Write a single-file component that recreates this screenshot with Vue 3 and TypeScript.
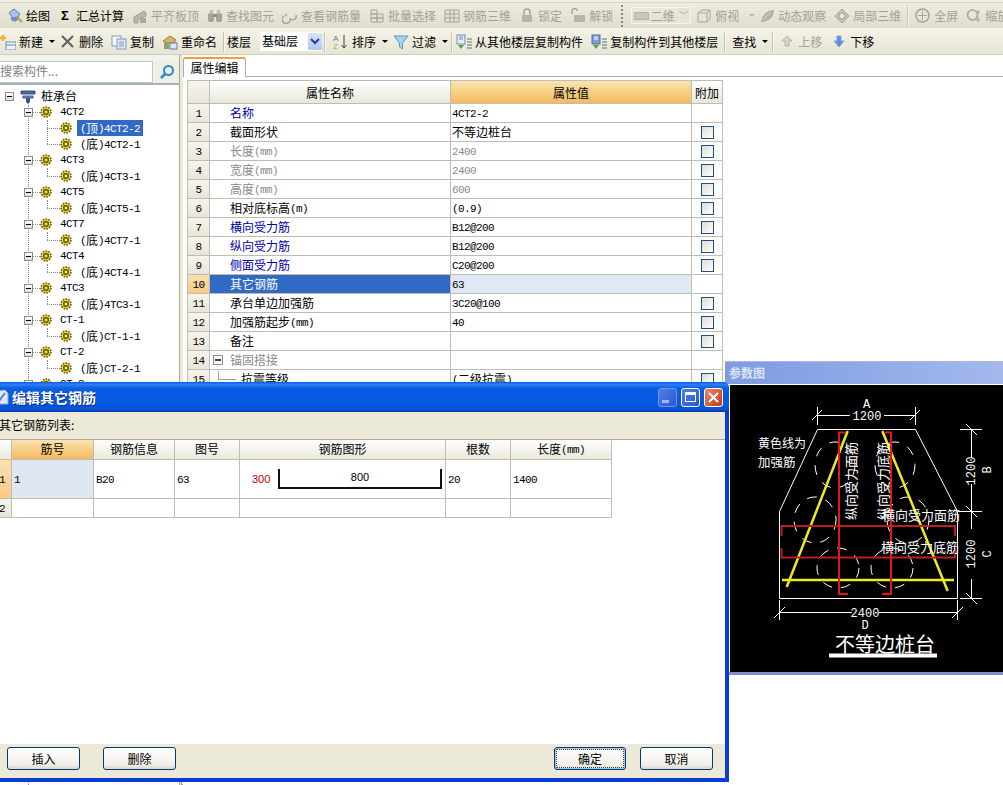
<script setup lang="ts">
const segs = (s: string) =>
  (s.match(/[\x20-\x7e]+|[^\x20-\x7e]+/g) || []).map((t) => ({ t, lat: /^[\x20-\x7e]/.test(t) }))

const ic: Record<string, string> = {
  draw: '<path d="M2 5l5-4 6 5-2 3-5 1z" fill="#a8c4ec" stroke="#5a7cb4"/><path d="M4 9l4 1 4-2v3l-4 3-4-2z" fill="#6f93cc"/><path d="M10 9l5 5" stroke="#c89a40" stroke-width="2"/>',
  align: '<path d="M2 9l10-6 2 2v3l-8 3v4H2z" fill="#b9b9ac" stroke="#9c9c90"/><rect x="8" y="10" width="6" height="5" fill="#a8a89c"/>',
  find: '<rect x="1" y="5" width="6" height="9" rx="2" fill="#a5a598"/><rect x="9" y="5" width="6" height="9" rx="2" fill="#a5a598"/><rect x="3" y="2" width="3" height="4" fill="#bdbdb0"/><rect x="10" y="2" width="3" height="4" fill="#bdbdb0"/><rect x="6" y="6" width="4" height="3" fill="#8f8f84"/>',
  view: '<path d="M2 8a4 4 0 1 0 6 2M5 6l-2 2" fill="none" stroke="#a5a598" stroke-width="1.5"/><path d="M9 11c3 2 6 0 5-4" fill="none" stroke="#a5a598" stroke-width="1.5"/>',
  batch: '<path d="M2 2h6v4H2zM2 6h6v4H2zM2 10h6v4H2zM8 6h6v4H8zM8 10h6v4H8z" fill="#e4e2d2" stroke="#a5a598"/>',
  rebar: '<path d="M1 2h14v12H1zM1 6h14M1 10h14M6 2v12M10 2v12" fill="#e4e2d2" stroke="#a5a598"/>',
  lock: '<path d="M5 7V4a3 3 0 0 1 6 0v3" fill="none" stroke="#a5a598" stroke-width="1.5"/><rect x="3" y="7" width="10" height="7" fill="#b5b5a8"/>',
  unlock: '<path d="M2 6V3a2.500 2.500 0 0 1 5 0" fill="none" stroke="#a5a598" stroke-width="1.500"/><rect x="4" y="7" width="11" height="7" fill="#b5b5a8"/>',
  box: '<path d="M2 5l4-3h8v9l-3 3H2z" fill="#e6e4d4" stroke="#a5a598"/><path d="M2 5h9v9M11 5l3-3" fill="none" stroke="#a5a598"/>',
  orbit: '<path d="M2 14C3 7 8 2 15 2c0 7-5 12-13 12z" fill="#b2b2a4"/><path d="M4 12l8-8" stroke="#dedccb"/>',
  local: '<path d="M8 1l7 7-7 7-7-7z" fill="#c3c3b6" stroke="#a5a598"/><circle cx="8" cy="8" r="3" fill="#e6e4d4" stroke="#a5a598"/>',
  full: '<circle cx="7.500" cy="7.500" r="6.500" fill="#e6e4d4" stroke="#a5a598" stroke-width="1.500"/><path d="M7.500 3v9M3 7.500h9" stroke="#a5a598"/>',
  zoom: '<circle cx="6.500" cy="7" r="5" fill="none" stroke="#a5a598" stroke-width="1.500"/><path d="M12 2v4M12 9v5M10 4h4M10 12h4" stroke="#a5a598"/>',
  add: '<path d="M3 1v6M0 4h6" stroke="#e8b830" stroke-width="2.500"/><rect x="6" y="8" width="10" height="8" fill="#eef3fb" stroke="#6c8ebf"/><path d="M6 11h10" stroke="#6c8ebf"/>',
  del: '<path d="M2 2l11 11M13 2L2 13" stroke="#60605c" stroke-width="2"/>',
  copy: '<rect x="1" y="2" width="9" height="10" fill="#f4f6fb" stroke="#7f9cc8"/><rect x="6" y="5" width="9" height="10" fill="#dfe8f6" stroke="#7f9cc8"/><path d="M8 8h5M8 10h5M8 12h5" stroke="#7f9cc8"/>',
  rename: '<path d="M1 7l7-5 6 4-2 3H4z" fill="#d8b060" stroke="#9a7a34"/><rect x="2" y="9" width="5" height="6" fill="#88a868"/><rect x="8" y="9" width="7" height="6" fill="#dfe8f6" stroke="#5a7cb4"/>',
  sort: '<text x="0" y="7" font-size="8" fill="#5878b8" font-family="Liberation Sans">A</text><text x="0" y="15" font-size="8" fill="#c89a40" font-family="Liberation Sans">Z</text><path d="M11 1v13M8.500 11l2.500 3 2.500-3" fill="none" stroke="#404040"/>',
  filter: '<path d="M1 2h14L9.500 9v6l-3-2V9z" fill="#a8d0f0" stroke="#5a9ac8"/>',
  cp1: '<rect x="1" y="1" width="8" height="9" fill="#e8eef8" stroke="#6c8ebf"/><path d="M3 3h4M3 5h4" stroke="#6c8ebf"/><path d="M2 11h6l-3 4z" fill="#50a050"/><path d="M11 5h5M11 8h5M11 11h5M11 14h5" stroke="#607080"/>',
  cp2: '<rect x="1" y="1" width="8" height="9" fill="#7f9cd8" stroke="#4a6ea8"/><path d="M3 3h4M3 5h4" stroke="#fff"/><path d="M2 11h6l-3 4z" fill="#50a050"/><path d="M11 5h5M11 8h5M11 11h5M11 14h5" stroke="#607080"/>',
  up: '<path d="M6 1l5 5H8v5H4V6H1z" fill="#d6d6c8" stroke="#b5b5a8"/>',
  down: '<path d="M4 1h4v5h3l-5 6-5-6h3z" fill="#5c8fe0" stroke="#7ca4e4"/>'
}

type Tool = { icon?: string; sigma?: boolean; label: string; off?: boolean; arrow?: boolean; sep?: boolean }
const tools1: Tool[] = [
  { icon: 'draw', label: '绘图' },
  { sigma: true, label: '汇总计算' },
  { icon: 'align', label: '平齐板顶', off: true },
  { icon: 'find', label: '查找图元', off: true },
  { icon: 'view', label: '查看钢筋量', off: true },
  { icon: 'batch', label: '批量选择', off: true },
  { icon: 'rebar', label: '钢筋三维', off: true },
  { icon: 'lock', label: '锁定', off: true },
  { icon: 'unlock', label: '解锁', off: true }
]
const tools1b: Tool[] = [
  { icon: 'box', label: '俯视', off: true, arrow: true },
  { icon: 'orbit', label: '动态观察', off: true },
  { icon: 'local', label: '局部三维', off: true }
]
const tools1c: Tool[] = [
  { icon: 'full', label: '全屏', off: true },
  { icon: 'zoom', label: '缩放', off: true }
]
const tools2a: Tool[] = [
  { icon: 'add', label: '新建', arrow: true },
  { icon: 'del', label: '删除' },
  { icon: 'copy', label: '复制' },
  { icon: 'rename', label: '重命名' }
]
const tools2b: Tool[] = [
  { icon: 'sort', label: '排序', arrow: true },
  { icon: 'filter', label: '过滤', arrow: true }
]
const tools2c: Tool[] = [
  { icon: 'cp1', label: '从其他楼层复制构件' },
  { icon: 'cp2', label: '复制构件到其他楼层' }
]
const tools2d: Tool[] = [
  { icon: 'up', label: '上移', off: true },
  { icon: 'down', label: '下移' }
]

const tree = [
  { name: '4CT2', leaves: ['(顶)4CT2-2', '(底)4CT2-1'] },
  { name: '4CT3', leaves: ['(底)4CT3-1'] },
  { name: '4CT5', leaves: ['(底)4CT5-1'] },
  { name: '4CT7', leaves: ['(底)4CT7-1'] },
  { name: '4CT4', leaves: ['(底)4CT4-1'] },
  { name: '4TC3', leaves: ['(底)4TC3-1'] },
  { name: 'CT-1', leaves: ['(底)CT-1-1'] },
  { name: 'CT-2', leaves: ['(底)CT-2-1'] },
  { name: 'CT-3', leaves: [] as string[] }
]

type Row = { n: string; v: string; kind?: string; nocheck?: boolean; sel?: boolean; group?: boolean; child?: boolean }
const rows: Row[] = [
  { n: '名称', v: '4CT2-2', kind: 'blue', nocheck: true },
  { n: '截面形状', v: '不等边桩台' },
  { n: '长度(mm)', v: '2400', kind: 'gray' },
  { n: '宽度(mm)', v: '2400', kind: 'gray' },
  { n: '高度(mm)', v: '600', kind: 'gray' },
  { n: '相对底标高(m)', v: '(0.9)' },
  { n: '横向受力筋', v: 'B12@200', kind: 'blue' },
  { n: '纵向受力筋', v: 'B12@200', kind: 'blue' },
  { n: '侧面受力筋', v: 'C20@200', kind: 'blue' },
  { n: '其它钢筋', v: '63', sel: true, nocheck: true },
  { n: '承台单边加强筋', v: '3C20@100' },
  { n: '加强筋起步(mm)', v: '40' },
  { n: '备注', v: '' },
  { n: '锚固搭接', v: '', group: true, nocheck: true },
  { n: '抗震等级', v: '(二级抗震)', child: true }
]
const dlgHead = ['', '筋号', '钢筋信息', '图号', '钢筋图形', '根数', '长度(mm)']
const circles = [
  [835, 465, 20, 23], [895, 465, 20, 23], [815, 520, 21, 23], [908, 520, 21, 23], [838, 568, 21, 20], [892, 568, 21, 20]
]
</script>

<template>
  <div class="page">
    <div class="strip"></div>
    <div class="bar bar1">
      <template v-for="t in tools1" :key="t.label">
        <span class="tool" :class="{ off: t.off }">
          <span v-if="t.sigma" class="sigma">Σ</span>
          <svg v-else class="ico" viewBox="0 0 16 16" v-html="ic[t.icon!]"></svg>
          <span>{{ t.label }}</span>
        </span>
      </template>
      <span class="dots"></span>
      <span class="combo2"><span class="combo2-ic"></span><span>二维</span><span class="combo2-btn">﹀</span></span>
      <span v-for="t in tools1b" :key="t.label" class="tool off">
        <svg class="ico" viewBox="0 0 16 16" v-html="ic[t.icon!]"></svg>
        <span>{{ t.label }}</span>
        <span v-if="t.arrow" class="caret wide"></span>
      </span>
      <span class="sep narrow"></span>
      <span v-for="t in tools1c" :key="t.label" class="tool off">
        <svg class="ico" viewBox="0 0 16 16" v-html="ic[t.icon!]"></svg>
        <span>{{ t.label }}</span>
      </span>
    </div>
    <div class="bar bar2">
      <span v-for="t in tools2a" :key="t.label" class="tool">
        <svg class="ico" viewBox="0 0 16 16" v-html="ic[t.icon!]"></svg>
        <span>{{ t.label }}</span>
        <span v-if="t.arrow" class="caret"></span>
      </span>
      <span class="sep narrow"></span>
      <span class="plain">楼层</span>
      <span class="combo"><span class="combo-text">基础层</span><span class="combo-btn"><svg viewBox="0 0 10 8" width="10" height="8"><path d="M1 1l4 4 4-4" fill="none" stroke="#24408a" stroke-width="2"/></svg></span></span>
      <span class="sep tight"></span>
      <span v-for="t in tools2b" :key="t.label" class="tool">
        <svg class="ico" viewBox="0 0 16 16" v-html="ic[t.icon!]"></svg>
        <span>{{ t.label }}</span>
        <span class="caret"></span>
      </span>
      <span class="sep before-copy"></span>
      <span v-for="t in tools2c" :key="t.label" class="tool">
        <svg class="ico" viewBox="0 0 16 16" v-html="ic[t.icon!]"></svg>
        <span>{{ t.label }}</span>
      </span>
      <span class="sep narrow"></span>
      <span class="tool"><span>查找</span><span class="caret"></span></span>
      <span class="sep after-find"></span>
      <span v-for="t in tools2d" :key="t.label" class="tool updn" :class="{ off: t.off }">
        <svg class="ico small" viewBox="0 0 12 13" v-html="ic[t.icon!]"></svg>
        <span>{{ t.label }}</span>
      </span>
    </div>

    <div class="main">
      <aside class="left">
        <div class="search">
          <div class="search-input">搜索构件...</div>
          <div class="search-btn">
            <svg viewBox="0 0 16 16" width="16" height="16"><circle cx="9.500" cy="6.500" r="4.500" fill="#eaf3fb" stroke="#2f86c8" stroke-width="2"/><path d="M6 10l-4 4" stroke="#2f86c8" stroke-width="2.500"/></svg>
          </div>
        </div>
        <div class="tree">
          <div class="vline"></div>
          <div class="t-row root">
            <span class="tbox"></span>
            <svg class="root-ic" viewBox="0 0 16 16" width="16" height="16"><path d="M1 3h14v3H1z" fill="#4a6ea8" stroke="#20386c" stroke-width=".8"/><path d="M3 8h10v2H3z" fill="#7b9bd0" stroke="#20386c" stroke-width=".8"/><path d="M6 10h4v4l-2 2-2-2z" fill="#33548c"/></svg>
            <span class="root-text">桩承台</span>
          </div>
          <template v-for="g in tree" :key="g.name">
            <div class="t-row lv1">
              <span class="tbox"></span>
              <span class="dash"></span>
              <svg class="gear" viewBox="0 0 12 12" width="12" height="12"><circle cx="6" cy="6" r="5" fill="#f0e020" stroke="#4c4610" stroke-width="1.400" stroke-dasharray="1.600 1.200"/><circle cx="6" cy="6" r="3.200" fill="#6e6820"/><circle cx="6" cy="6" r="1.300" fill="#f6ee60"/></svg>
              <span class="lat name">{{ g.name }}</span>
            </div>
            <div v-for="(l, li) in g.leaves" :key="l" class="t-row lv2">
              <span class="leaf-v" :class="{ tall: li > 0 }"></span>
              <span class="leaf-dash"></span>
              <svg class="gear" viewBox="0 0 12 12" width="12" height="12"><circle cx="6" cy="6" r="5" fill="#f0e020" stroke="#4c4610" stroke-width="1.400" stroke-dasharray="1.600 1.200"/><circle cx="6" cy="6" r="3.200" fill="#6e6820"/><circle cx="6" cy="6" r="1.300" fill="#f6ee60"/></svg>
              <span class="leaf-text" :class="{ picked: l === '(顶)4CT2-2' }"><span v-for="(p, i) in segs(l)" :key="i" :class="{ lat: p.lat }">{{ p.t }}</span></span>
            </div>
          </template>
        </div>
      </aside>
      <div class="split"><span class="grip"></span></div>
      <section class="right">
        <div class="tabs"><span class="tab">属性编辑</span></div>
        <div class="grid">
          <div class="g-row g-head">
            <div class="c c0"></div>
            <div class="c">属性名称</div>
            <div class="c hot">属性值</div>
            <div class="c c3">附加</div>
          </div>
          <div v-for="(r, i) in rows" :key="r.n" class="g-row" :class="r.kind">
            <div class="c c0 num" :class="{ hotnum: r.sel }"><span class="lat">{{ i + 1 }}</span></div>
            <div class="c nm" :class="{ sel: r.sel, ingroup: r.child }">
              <span v-if="r.group" class="gbox"></span>
              <span v-if="r.child" class="gline"></span>
              <span v-for="(p, k) in segs(r.n)" :key="k" :class="{ lat: p.lat }">{{ p.t }}</span>
            </div>
            <div class="c vl" :class="{ selv: r.sel }"><span v-for="(p, k) in segs(r.v)" :key="k" :class="{ lat: p.lat }">{{ p.t }}</span></div>
            <div class="c c3 chk"><span v-if="!r.nocheck" class="check"></span></div>
          </div>
        </div>
      </section>
    </div>

    <div class="param">
      <div class="p-title">参数图</div>
      <div class="p-body">
        <svg class="cad" viewBox="730 385 273 287" width="273" height="287">
          <g stroke="#fff" fill="none" stroke-width="1">
            <path d="M817.500 429.500H915.500L957.500 511.500V598.500H779.500V511.500Z"/>
            <path d="M817.500 415.500H850M884 415.500H915.500M817.500 407V425M915.500 407V425M812 420l10-10M910 420l10-10"/>
            <path d="M971.500 429.500V458M971.500 484V529M971.500 579V598.500M960 429.500H982M958 511.500H982M960 598.500H982M966 424l11 11M966 506l11 11M966 593l11 11"/>
            <path d="M779.500 612.500H852M879 612.500H957.500M779.500 600V620M957.500 600V620M774 618l11-11M952 618l11-11"/>
            <ellipse v-for="(c, i) in circles" :key="i" :cx="c[0]" :cy="c[1]" :rx="c[2]" :ry="c[3]" stroke-dasharray="10 9"/>
          </g>
          <g fill="none">
            <path d="M847.700 431L786.700 587M882.300 431L947.700 591M782 580H954" stroke="#f0e820" stroke-width="2.500"/>
            <path d="M781.500 536V526H955V536M781.500 548V557.500H955V548" stroke="#b82020" stroke-width="2"/>
            <path d="M845 432.500H839V594H848M885 432.500H891V594H882" stroke="#e01818" stroke-width="2"/>
          </g>
          <g class="cad-text" fill="#fff">
            <text x="866.500" y="408" text-anchor="middle" class="m">A</text>
            <text x="867" y="420" text-anchor="middle" class="m">1200</text>
            <text x="758" y="447.500">黄色线为</text>
            <text x="758" y="467" class="narrow">加强筋</text>
            <text x="865" y="617" text-anchor="middle" class="m">2400</text>
            <text x="865" y="629" text-anchor="middle" class="m">D</text>
            <text transform="translate(975 471) rotate(-90)" text-anchor="middle" class="m">1200</text>
            <text transform="translate(975 554) rotate(-90)" text-anchor="middle" class="m">1200</text>
            <text transform="translate(991 470) rotate(-90)" text-anchor="middle" class="m">B</text>
            <text transform="translate(991 554) rotate(-90)" text-anchor="middle" class="m">C</text>
            <text transform="translate(856 481) rotate(-90)" text-anchor="middle" class="z">纵向受力面筋</text>
            <text transform="translate(888 481) rotate(-90)" text-anchor="middle" class="z">纵向受力底筋</text>
            <text x="921" y="520" text-anchor="middle" class="z">横向受力面筋</text>
            <text x="920" y="552" text-anchor="middle" class="z">横向受力底筋</text>
            <text x="885" y="652" text-anchor="middle" class="big">不等边桩台</text>
          </g>
          <rect x="829" y="653.500" width="108" height="4" fill="#fff"/>
        </svg>
      </div>
    </div>

    <div class="dialog">
      <div class="d-title">
        <svg class="d-ic" viewBox="0 0 14 16" width="14" height="16"><path d="M1 2l9-1 3 3v11H1z" fill="#dfe8f6" stroke="#8aa4cc"/><path d="M4 12l6-8" stroke="#5c84c0" stroke-width="2"/></svg>
        <span class="d-name">编辑其它钢筋</span>
        <span class="w-btns">
          <span class="w-btn min"><i></i></span>
          <span class="w-btn max"><i></i></span>
          <span class="w-btn close">
            <svg viewBox="0 0 11 11" width="11" height="11"><path d="M1 1l9 9M10 1l-9 9" stroke="#fff" stroke-width="2.200"/></svg>
          </span>
        </span>
      </div>
      <div class="d-body">
        <div class="d-label">其它钢筋列表:</div>
        <div class="d-white">
          <div class="d-row d-head">
            <div v-for="(h, i) in dlgHead" :key="i" class="d-c" :class="{ dhot: i === 1 }"><span v-for="(p, k) in segs(h)" :key="k" :class="{ lat: p.lat }">{{ p.t }}</span></div>
          </div>
          <div class="d-row d-r1">
            <div class="d-c d-n hotnum"><span class="lat">1</span></div>
            <div class="d-c lft cur"><span class="lat">1</span></div>
            <div class="d-c lft"><span class="lat">B20</span></div>
            <div class="d-c lft"><span class="lat">63</span></div>
            <div class="d-c shape">
              <span class="s-300">300</span>
              <span class="s-bar"><span class="s-800">800</span></span>
            </div>
            <div class="d-c lft"><span class="lat">20</span></div>
            <div class="d-c lft"><span class="lat">1400</span></div>
          </div>
          <div class="d-row d-r2">
            <div class="d-c d-n"><span class="lat">2</span></div>
            <div class="d-c"></div><div class="d-c"></div><div class="d-c"></div><div class="d-c"></div><div class="d-c"></div><div class="d-c"></div>
          </div>
        </div>
        <div class="d-foot">
          <span class="btn">插入</span>
          <span class="btn">删除</span>
          <span class="grow"></span>
          <span class="btn def">确定</span>
          <span class="btn">取消</span>
        </div>
      </div>
    </div>
  </div>
</template>

<style>
html, body { margin: 0; padding: 0; background: #fff; overflow: hidden; }
.lat { font-family: "Liberation Mono", monospace; font-size: 11px; letter-spacing: -0.6px; vertical-align: 1px; }
</style>

<style scoped>
.page {
  position: relative; width: 1003px; height: 785px; overflow: hidden; background: #fff;
  font: 12px/16px "Noto Sans CJK SC", "Liberation Sans", sans-serif; color: #000;
  display: flex; flex-direction: column;
}
.strip { height: 3px; background: #f0efe4; border-bottom: 1px solid #d8d6c4; box-sizing: border-box; flex: none; }
.bar { display: flex; align-items: center; white-space: nowrap; flex: none; box-sizing: border-box; }
.bar1 { height: 26px; padding-left: 7px; gap: 8px; background: linear-gradient(#eeecdf, #dfddcb); border-bottom: 1px solid #f8f7ee; }
.bar2 { height: 26px; gap: 8px; background: linear-gradient(#f3f2e6, #e7e5d4); border-bottom: 1px solid #cfcdbb; }
.tool { display: inline-flex; align-items: center; gap: 3px; flex: none; }
.tool.off { color: #a2a294; }
.ico { width: 16px; height: 16px; flex: none; }
.ico.small { width: 12px; height: 13px; margin-right: 2px; }
.sigma { width: 14px; text-align: center; font: bold 13px "Liberation Sans", sans-serif; margin-right: 1px; }
.caret { width: 0; height: 0; border: 3px solid transparent; border-top: 3px solid #000; border-bottom: 0; margin: 0 -3px 0 3px; }
.caret.wide { margin: 0 -4px 0 7px; border-top-color: #b5b5a8; }
.sep { width: 1px; height: 20px; background: #c4c2b0; border-right: 1px solid #fbfaf2; flex: none; }
.sep.narrow { margin: 0 -2px; }
.sep.tight { margin: 0 -1px 0 -6px; }
.sep.before-copy { margin: 0 -5px 0 -2px; }
.sep.after-find { margin: 0 -1px; }
.updn + .updn { margin-left: 3px; }
.dots { width: 2px; height: 22px; background: repeating-linear-gradient(#8c8a78 0 2px, transparent 2px 4px); flex: none; }
.combo2 { display: inline-flex; align-items: center; width: 60px; height: 17px; border: 1px solid #f6f5ec; box-sizing: border-box; color: #a2a294; gap: 2px; padding-left: 2px; margin-right: -3px; flex: none; }
.combo2-ic { width: 15px; height: 8px; background: #c8c6b4; border: 1px solid #b5b5a8; box-sizing: border-box; }
.combo2-btn { margin-left: auto; width: 14px; height: 15px; line-height: 15px; text-align: center; font-size: 9px; background: #e6e4d2; }
.plain { margin-left: -4px; }
.combo { display: inline-flex; width: 62px; height: 19px; background: #fff; align-items: center; margin-left: 1px; flex: none; }
.combo-text { flex: 1; padding-left: 2px; margin-top: -2px; }
.combo-btn { width: 14px; height: 17px; background: linear-gradient(#d8e4f8, #b0c8f0); display: flex; align-items: center; justify-content: center; }

.main { flex: 1; display: flex; min-height: 0; }
.left { width: 180px; flex: none; display: flex; flex-direction: column; background: #f4f3ea; border-right: 1px solid #a8a898; box-sizing: border-box; }
.search { display: flex; height: 30px; padding-top: 6px; box-sizing: border-box; flex: none; border-bottom: 2px solid #a8b0b4; }
.search-input { width: 153px; background: #fff; border: 1px solid #b8c8d8; border-left: 0; box-sizing: border-box; color: #808080; line-height: 18px; }
.search-btn { width: 25px; background: #f0efe6; display: flex; align-items: center; justify-content: center; margin-left: 1px; }
.tree { position: relative; flex: 1; background: #fff; padding-top: 3px; overflow: hidden; }
.vline { position: absolute; left: 28px; top: 20px; bottom: 0; border-left: 1px dotted #8c8c8c; }
.t-row { display: flex; align-items: center; height: 16px; position: relative; white-space: nowrap; }
.tbox { width: 9px; height: 9px; border: 1px solid #8c8c8c; box-sizing: border-box; background: linear-gradient(to bottom, #fff, #ddd); position: relative; flex: none; z-index: 1; }
.tbox::after { content: ""; position: absolute; left: 1px; right: 1px; top: 3px; height: 1px; background: #000; }
.root { padding-left: 5px; }
.root-ic { margin-left: 6px; }
.root-text { margin-left: 5px; }
.lv1 { padding-left: 24px; }
.dash { width: 7px; border-top: 1px dotted #8c8c8c; flex: none; }
.gear { flex: none; }
.name { margin-left: 8px; }
.lv2 { padding-left: 29px; }
.leaf-v { position: absolute; left: 47px; bottom: 8px; height: 8px; border-left: 1px dotted #8c8c8c; }
.leaf-v.tall { height: 16px; }
.leaf-dash { margin-left: 18px; width: 13px; border-top: 1px dotted #8c8c8c; flex: none; }
.leaf-text { margin-left: 5px; padding: 0 3px 0 3px; height: 16px; }
.picked { background: #316ac5; color: #fff; }
.split { width: 6px; flex: none; background: #eceadb; border-right: 1px solid #c0c0b0; box-sizing: border-box; position: relative; }
.grip { position: absolute; left: 1px; top: 380px; bottom: 0; width: 4px; border: 1px solid #a0a090; box-sizing: border-box; }
.right { flex: 1; min-width: 0; background: #fff; margin-left: -3px; position: relative; }
.tabs { height: 22px; border-bottom: 1px solid #9fb0b8; box-sizing: border-box; display: flex; align-items: flex-end; }
.tab { width: 63px; height: 20px; box-sizing: border-box; margin-bottom: -1px; background: #fff; border: 1px solid #9fb0b8; border-bottom: 0; border-top: 2px solid #f0a030; border-radius: 3px 3px 0 0; text-align: center; line-height: 17px; }
.grid { margin: 3px 0 0 4px; width: 536px; border-left: 1px solid #bdbdb5; box-sizing: border-box; }
.g-row { display: grid; grid-template-columns: 22px 241px 241px 31px; height: 19px; }
.g-head { height: 24px; }
.c { border-right: 1px solid #bdbdb5; border-bottom: 1px solid #bdbdb5; box-sizing: border-box; line-height: 18px; white-space: nowrap; overflow: hidden; }
.g-head .c { background: linear-gradient(#fff, #e9e7d9); text-align: center; line-height: 23px; border-top: 1px solid #bdbdb5; }
.g-head .hot { background: linear-gradient(#fbe3b0, #f2bb5c); }
.g-head .c0, .c0 { background: linear-gradient(#f6f5ec, #e8e6d8); }
.num { text-align: center; }
.hotnum { background: linear-gradient(#fde0b0, #f8c888) !important; }
.nm { padding-left: 20px; position: relative; }
.vl { padding-left: 1px; }
.blue .nm { color: #0000a8; }
.gray .nm, .gray .vl { color: #8a8a8a; }
.sel { background: #316ac5; color: #fff; }
.selv { background: #e0e8f4; }
.chk { display: flex; align-items: center; justify-content: center; }
.check { width: 13px; height: 13px; box-sizing: border-box; border: 1px solid #1c5180; background: linear-gradient(135deg, #dcdcd6, #fff); }
.gbox { position: absolute; left: 3px; top: 4px; width: 10px; height: 10px; border: 1px solid #8c8c8c; box-sizing: border-box; color: #555; }
.gbox::after { content: ""; position: absolute; left: 1px; right: 1px; top: 3px; height: 2px; background: #404040; }
.g-row:nth-child(15) .nm { color: #8a8a8a; }
.ingroup { padding-left: 31px; }
.gline { position: absolute; left: 8px; top: 9px; width: 18px; border-top: 1px solid #9c9c9c; }
.gline::before { content: ""; position: absolute; left: 0; top: -9px; height: 9px; border-left: 1px solid #9c9c9c; }

.param { position: absolute; left: 725px; top: 361px; width: 278px; height: 314px; display: flex; flex-direction: column; z-index: 1; border-top: 1px solid #a8b8e0; box-sizing: border-box; border-bottom: 3px solid #7f90cc; background: #fff; }
.p-title { height: 22px; line-height: 22px; flex: none; background: linear-gradient(to right, #7d9be2, #a4b8ec); color: #dbe3f4; font-weight: 700; padding-left: 4px; box-sizing: border-box; }
.p-body { flex: 1; background: #000; margin-left: 5px; border-top: 1px solid #fff; box-sizing: border-box; overflow: hidden; }
.cad { display: block; }
.cad-text text { font: 12px "Noto Sans CJK SC", sans-serif; }
.cad-text text.m { font: 12px "Liberation Mono", monospace; }
.cad-text text.z { font-size: 13px; font-family: "Noto Sans CJK SC", sans-serif; }
.cad-text text.big { font-size: 20px; font-family: "Noto Sans CJK SC", sans-serif; }
.cad-text text.narrow { font-size: 12.500px; }

.dialog { position: absolute; left: -14px; top: 382px; width: 743px; height: 400px; z-index: 2; box-sizing: border-box; border: 4px solid #0a3ad8; border-top: 0; border-radius: 6px 6px 0 0; background: #0a3ad8; display: flex; flex-direction: column; }
.d-title { height: 30px; flex: none; margin: 0 -4px; padding: 0 6px 0 9px; display: flex; align-items: center; gap: 3px; border-radius: 6px 6px 0 0; background: linear-gradient(#0a5ae0 0, #2a80f0 8%, #0a5ce4 22%, #0558e0 75%, #0a50d0 92%, #0838b8 100%); }
.d-name { color: #fff; font-weight: 700; font-size: 14px; text-shadow: 1px 1px #0a2a80; }
.w-btns { margin-left: auto; display: flex; gap: 4px; }
.w-btn { width: 19px; height: 19px; box-sizing: border-box; border: 1px solid #fff; border-radius: 3px; display: flex; align-items: center; justify-content: center; position: relative; }
.min { background: linear-gradient(135deg, #4e80ea, #2858cc); border-color: #6c94ee; }
.min i { position: absolute; left: 3px; bottom: 3px; width: 7px; height: 3px; background: #9cb8f4; }
.max { background: linear-gradient(135deg, #4e80ea, #2858cc); }
.max i { width: 11px; height: 10px; box-sizing: border-box; border: 1px solid #fff; border-top-width: 3px; }
.close { background: linear-gradient(135deg, #e88868, #c83818); }
.d-body { flex: 1; display: flex; flex-direction: column; background: #ece9d8; min-height: 0; }
.d-label { height: 27px; line-height: 26px; padding-left: 9px; flex: none; }
.d-white { flex: 1; background: #fff; border-top: 1px solid #a8a898; min-height: 0; }
.d-row { display: grid; grid-template-columns: 22px 82px 81px 65px 206px 65px 101px; width: 622px; }
.d-head { height: 20px; }
.d-r1 { height: 39px; }
.d-r2 { height: 19px; }
.d-c { border-right: 1px solid #bdbdb5; border-bottom: 1px solid #bdbdb5; box-sizing: border-box; white-space: nowrap; overflow: hidden; }
.d-head .d-c { background: linear-gradient(#fff, #ebe9dc); text-align: center; line-height: 18px; }
.d-head .dhot { background: linear-gradient(#fbe3b0, #f2bb5c); }
.d-n { text-align: right; padding-right: 6px; background: linear-gradient(#f6f5ec, #e8e6d8); line-height: 18px; }
.d-r1 .d-n { line-height: 38px; }
.lft { line-height: 38px; padding-left: 2px; }
.cur { background: #dfe7f3; }
.shape { display: flex; align-items: flex-start; padding: 9px 0 0 12px; }
.s-300 { color: #c00000; font: 11px/20px "Liberation Sans", sans-serif; width: 26px; flex: none; }
.s-bar { width: 164px; height: 20px; box-sizing: border-box; border: 2px solid #111; border-top: 0; text-align: center; font: 11px/16px "Liberation Sans", sans-serif; flex: none; }
.d-foot { height: 34px; flex: none; display: flex; align-items: flex-start; padding: 3px 12px 0 17px; box-sizing: border-box; gap: 23px; }
.grow { flex: 1; }
.btn { width: 73px; height: 23px; line-height: 21px; box-sizing: border-box; text-align: center; border: 1px solid #003c74; border-radius: 3px; background: linear-gradient(#fff, #f0efe8 80%, #dcd8cc); }
.def { margin-right: -9px; width: 72px; box-shadow: inset 0 0 0 1px #a8c0e8; outline: 1px dotted #404040; outline-offset: -3px; }
</style>
